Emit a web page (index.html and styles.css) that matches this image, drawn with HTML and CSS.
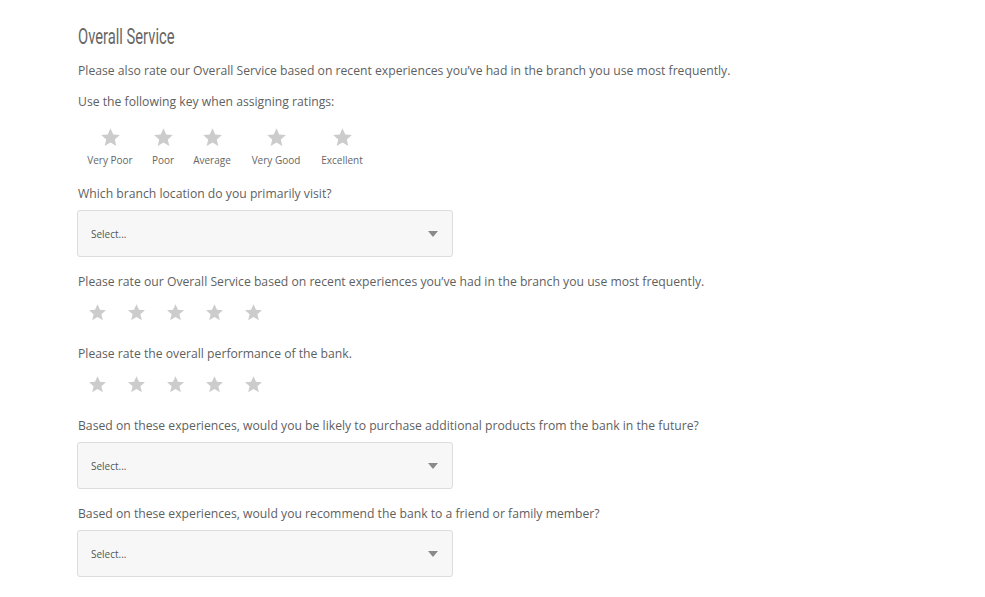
FILE: index.html
```html
<!DOCTYPE html>
<html>
<head>
<meta charset="utf-8">
<link rel="stylesheet" href="styles.css">
</head>
<body>
<main class="survey">
  <h2 class="title"><span class="title-text">Overall Service</span></h2>
  <p class="text intro">Please also rate our Overall Service based on recent experiences you’ve had in the branch you use most frequently.</p>
  <p class="text key-label">Use the following key when assigning ratings:</p>
  <div class="key">
    <div class="key-item k1"><svg class="star big" viewBox="0 0 24 24"><path d="M12 1.5l3.1 7.1 7.6.6-5.8 5 1.8 7.5L12 17.7l-6.7 4 1.8-7.5-5.8-5 7.6-.6z"/></svg><span>Very Poor</span></div>
    <div class="key-item k2"><svg class="star big" viewBox="0 0 24 24"><path d="M12 1.5l3.1 7.1 7.6.6-5.8 5 1.8 7.5L12 17.7l-6.7 4 1.8-7.5-5.8-5 7.6-.6z"/></svg><span>Poor</span></div>
    <div class="key-item k3"><svg class="star big" viewBox="0 0 24 24"><path d="M12 1.5l3.1 7.1 7.6.6-5.8 5 1.8 7.5L12 17.7l-6.7 4 1.8-7.5-5.8-5 7.6-.6z"/></svg><span>Average</span></div>
    <div class="key-item k4"><svg class="star big" viewBox="0 0 24 24"><path d="M12 1.5l3.1 7.1 7.6.6-5.8 5 1.8 7.5L12 17.7l-6.7 4 1.8-7.5-5.8-5 7.6-.6z"/></svg><span>Very Good</span></div>
    <div class="key-item k5"><svg class="star big" viewBox="0 0 24 24"><path d="M12 1.5l3.1 7.1 7.6.6-5.8 5 1.8 7.5L12 17.7l-6.7 4 1.8-7.5-5.8-5 7.6-.6z"/></svg><span>Excellent</span></div>
  </div>

  <p class="text q q1">Which branch location do you primarily visit?</p>
  <div class="select"><span>Select...</span><i class="caret"></i></div>

  <p class="text q">Please rate our Overall Service based on recent experiences you’ve had in the branch you use most frequently.</p>
  <div class="stars">
    <svg class="star" viewBox="0 0 24 24"><path d="M12 1.5l3.1 7.1 7.6.6-5.8 5 1.8 7.5L12 17.7l-6.7 4 1.8-7.5-5.8-5 7.6-.6z"/></svg>
    <svg class="star" viewBox="0 0 24 24"><path d="M12 1.5l3.1 7.1 7.6.6-5.8 5 1.8 7.5L12 17.7l-6.7 4 1.8-7.5-5.8-5 7.6-.6z"/></svg>
    <svg class="star" viewBox="0 0 24 24"><path d="M12 1.5l3.1 7.1 7.6.6-5.8 5 1.8 7.5L12 17.7l-6.7 4 1.8-7.5-5.8-5 7.6-.6z"/></svg>
    <svg class="star" viewBox="0 0 24 24"><path d="M12 1.5l3.1 7.1 7.6.6-5.8 5 1.8 7.5L12 17.7l-6.7 4 1.8-7.5-5.8-5 7.6-.6z"/></svg>
    <svg class="star" viewBox="0 0 24 24"><path d="M12 1.5l3.1 7.1 7.6.6-5.8 5 1.8 7.5L12 17.7l-6.7 4 1.8-7.5-5.8-5 7.6-.6z"/></svg>
  </div>

  <p class="text q after-stars">Please rate the overall performance of the bank.</p>
  <div class="stars">
    <svg class="star" viewBox="0 0 24 24"><path d="M12 1.5l3.1 7.1 7.6.6-5.8 5 1.8 7.5L12 17.7l-6.7 4 1.8-7.5-5.8-5 7.6-.6z"/></svg>
    <svg class="star" viewBox="0 0 24 24"><path d="M12 1.5l3.1 7.1 7.6.6-5.8 5 1.8 7.5L12 17.7l-6.7 4 1.8-7.5-5.8-5 7.6-.6z"/></svg>
    <svg class="star" viewBox="0 0 24 24"><path d="M12 1.5l3.1 7.1 7.6.6-5.8 5 1.8 7.5L12 17.7l-6.7 4 1.8-7.5-5.8-5 7.6-.6z"/></svg>
    <svg class="star" viewBox="0 0 24 24"><path d="M12 1.5l3.1 7.1 7.6.6-5.8 5 1.8 7.5L12 17.7l-6.7 4 1.8-7.5-5.8-5 7.6-.6z"/></svg>
    <svg class="star" viewBox="0 0 24 24"><path d="M12 1.5l3.1 7.1 7.6.6-5.8 5 1.8 7.5L12 17.7l-6.7 4 1.8-7.5-5.8-5 7.6-.6z"/></svg>
  </div>

  <p class="text q after-stars">Based on these experiences, would you be likely to purchase additional products from the bank in the future?</p>
  <div class="select"><span>Select...</span><i class="caret"></i></div>

  <p class="text q">Based on these experiences, would you recommend the bank to a friend or family member?</p>
  <div class="select"><span>Select...</span><i class="caret"></i></div>
</main>
</body>
</html>
```

FILE: styles.css
```css
* { box-sizing: border-box; }
html, body { margin: 0; padding: 0; background: #fff; }
body {
  font-family: "Open Sans", "Liberation Sans", sans-serif;
  color: #5f5f5f;
}
.survey {
  padding: 25px 0 0 78px;
  width: 900px;
}
.title {
  margin: 0;
  font-family: "Roboto", "Liberation Sans", sans-serif;
  font-weight: 400;
  font-size: 22px;
  line-height: 24px;
  color: #666;
  white-space: nowrap;
}
.title-text {
  display: inline-block;
  transform: scaleX(0.67);
  transform-origin: left center;
}
.text {
  margin: 0;
  font-size: 12.2px;
  line-height: 16px;
}
.intro { margin-top: 14px; }
.key-label { margin-top: 15px; }
.key {
  display: flex;
  margin-top: 17px;
}
.key-item {
  width: 44px;
  display: flex;
  flex-direction: column;
  align-items: center;
  font-size: 10px;
  line-height: 12px;
  color: #666;
}
.key-item span { margin-top: 6px; white-space: nowrap; }
.k1 { margin-left: 10px; }
.k2 { margin-left: 9px; }
.k3 { margin-left: 5px; }
.k4 { margin-left: 20px; }
.k5 { margin-left: 22px; }
.star { width: 19px; height: 19px; fill: #cccccc; display: block; }
.star.big { width: 21px; height: 21px; }
.q { margin-top: 17px; }
.q1 { margin-top: 20px; }
.after-stars { margin-top: 24px; }
.select {
  margin-left: -1px;
  width: 376px;
  height: 47px;
  border: 1px solid #dcdcdc;
  border-radius: 3px;
  background: #f7f7f7;
  display: flex;
  align-items: center;
  justify-content: space-between;
  padding: 0 14px 0 13px;
  font-size: 10px;
  color: #555;
}
.q + .select { margin-top: 8px; }
.caret {
  width: 0; height: 0;
  border-left: 5px solid transparent;
  border-right: 5px solid transparent;
  border-top: 6px solid #8a8a8a;
}
.stars {
  display: flex;
  gap: 20px;
  margin-top: 13px;
  margin-left: 10px;
}
```
